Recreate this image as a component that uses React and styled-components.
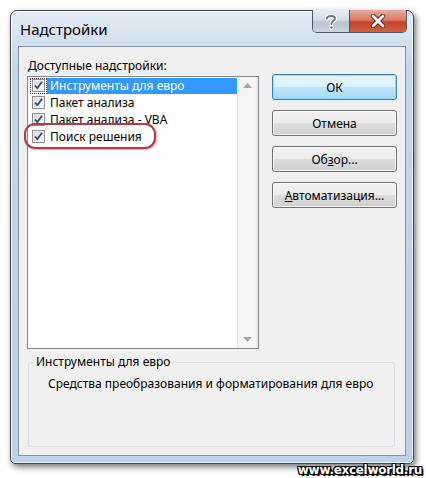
import React from 'react'
import styled, { createGlobalStyle } from 'styled-components'

const GlobalStyle = createGlobalStyle`
  html, body {
    margin: 0;
    padding: 0;
    background: #ffffff;
  }
  body {
    font-family: "Noto Sans", "Open Sans", "DejaVu Sans", sans-serif;
    font-size: 12px;
    color: #000000;
  }
`

const Page = styled.div`
  position: relative;
  width: 426px;
  height: 478px;
  padding: 10px 0 0 10px;
  box-sizing: border-box;
  overflow: hidden;
`

const Window = styled.div`
  width: 404px;
  height: 454px;
  box-sizing: border-box;
  border: 1px solid #3b4a5c;
  border-radius: 7px 7px 5px 5px;
  padding: 0 7px 7px 7px;
  display: flex;
  flex-direction: column;
  background: linear-gradient(180deg, #e4edf7 0px, #d3e1ef 30px, #c2d6eb 60px, #bcd2ea 100%);
  box-shadow: 2px 3px 6px rgba(0, 0, 0, 0.55), inset 0 0 0 1px rgba(255, 255, 255, 0.7);
`

const TitleBar = styled.div`
  height: 35px;
  display: flex;
  align-items: center;
  justify-content: space-between;
`

const Title = styled.div`
  padding-left: 2px;
  font-size: 15px;
  color: #000000;
  margin-top: 1px;
`

const Controls = styled.div`
  align-self: flex-start;
  margin-top: -1px;
  margin-right: -1px;
  display: flex;
  height: 23px;
  border: 1px solid #4b5866;
  border-top: none;
  border-radius: 0 0 5px 5px;
  overflow: hidden;
  box-sizing: border-box;
`

const CaptionButton = styled.div`
  width: ${p => p.$w}px;
  height: 100%;
  display: flex;
  align-items: center;
  justify-content: center;
  box-sizing: border-box;
  background: ${p => p.$close
    ? 'linear-gradient(180deg, #e9a99a 0%, #dc7b66 45%, #c4432b 55%, #d2603f 100%)'
    : 'linear-gradient(180deg, #e6edf4 0%, #d3dde8 45%, #b9c6d4 55%, #c9d5e1 100%)'};
  border-left: ${p => p.$close ? '1px solid #5a4a4a' : 'none'};
`

const Client = styled.div`
  flex: 1;
  border: 1px solid #7f95ad;
  background: #f0f0f0;
  padding: 11px 8px 0 8px;
  display: flex;
  flex-direction: column;
`

const Main = styled.div`
  display: grid;
  grid-template-columns: 232px 125px;
  column-gap: 13px;
`

const LeftColumn = styled.div`
  display: flex;
  flex-direction: column;
`

const FieldLabel = styled.div`
  height: 16px;
  line-height: 16px;
  margin-left: 1px;
  margin-bottom: 2px;
`

const ListBox = styled.div`
  height: 273px;
  box-sizing: border-box;
  border: 1px solid #828790;
  background: #ffffff;
  display: flex;
`

const Items = styled.div`
  flex: 1;
`

const Row = styled.div`
  height: 17px;
  display: flex;
  align-items: center;
`

const CheckCell = styled.div`
  width: 17px;
  height: 16px;
  margin-left: 2px;
  display: flex;
  align-items: center;
  justify-content: center;
  box-sizing: border-box;
  outline: ${p => p.$focused ? '1px dotted #333333' : 'none'};
  outline-offset: -1px;
`

const ItemText = styled.div`
  flex: 1;
  height: 16px;
  line-height: 16px;
  padding-left: 3px;
  background: ${p => p.$selected ? '#3399ff' : 'transparent'};
  color: ${p => p.$selected ? '#ffffff' : '#000000'};
  white-space: nowrap;
`

const Highlight = styled.div`
  position: relative;
  display: flex;
  align-items: center;
  &::after {
    content: '';
    position: absolute;
    left: -4px;
    top: -6px;
    width: 128px;
    height: 22px;
    border: 2px solid #b2384a;
    border-radius: 11px;
    box-shadow: 1px 1px 2px rgba(120, 30, 40, 0.35);
  }
`

const ScrollBar = styled.div`
  width: 21px;
  display: flex;
  flex-direction: column;
  justify-content: space-between;
  background: linear-gradient(90deg, #e3e3e3 0px, #f5f5f5 2px, #f5f5f5 18px, #e6e6e6 21px);
`

const ScrollArrow = styled.div`
  height: 17px;
  display: flex;
  align-items: center;
  justify-content: center;
`

const ButtonColumn = styled.div`
  padding-top: 16px;
  display: flex;
  flex-direction: column;
  gap: 10px;
`

const Button = styled.div`
  height: 26px;
  box-sizing: border-box;
  border: 1px solid ${p => p.$default ? '#3c7fb1' : '#707070'};
  border-radius: 3px;
  display: flex;
  align-items: center;
  justify-content: center;
  background: ${p => p.$default
    ? 'linear-gradient(180deg, #eaf6fd 0%, #d9f0fc 50%, #bee6fd 51%, #a7d9f5 100%)'
    : 'linear-gradient(180deg, #f2f2f2 0%, #ebebeb 50%, #dddddd 51%, #cfcfcf 100%)'};
  box-shadow: inset 0 0 0 1px ${p => p.$default ? 'rgba(120, 220, 255, 0.8)' : 'rgba(255, 255, 255, 0.8)'};
`

const GroupBox = styled.fieldset`
  margin: 5px 0 0 1px;
  width: 367px;
  height: 93px;
  box-sizing: border-box;
  padding: 0;
  border: 1px solid #d5dfe5;
  border-radius: 3px;
`

const Legend = styled.legend`
  margin-left: 5px;
  padding: 0 2px;
  line-height: 16px;
`

const Description = styled.div`
  margin-top: 6px;
  padding-left: 19px;
  line-height: 16px;
`

const Watermark = styled.div`
  position: absolute;
  right: 4px;
  bottom: 1px;
  font-family: "DejaVu Sans", Verdana, sans-serif;
  font-weight: bold;
  font-size: 12px;
  letter-spacing: -0.3px;
  color: #ffffff;
  text-shadow:
    -1px -1px 0 #000, 1px -1px 0 #000, -1px 1px 0 #000, 1px 1px 0 #000,
    0 -1px 0 #000, 0 1px 0 #000, -1px 0 0 #000, 1px 0 0 #000, 2px 2px 1px #000;
`

function CheckBox() {
  return (
    <svg width="13" height="13" viewBox="0 0 13 13">
      <defs>
        <linearGradient id="cb" x1="0" y1="0" x2="1" y2="1">
          <stop offset="0" stopColor="#dcdcdc" />
          <stop offset="1" stopColor="#ffffff" />
        </linearGradient>
      </defs>
      <rect x="0.5" y="0.5" width="12" height="12" fill="#ffffff" stroke="#8e8f8f" />
      <rect x="2" y="2" width="9" height="9" fill="url(#cb)" stroke="#c8c8c8" strokeWidth="0.5" />
      <path d="M3 6.5 L5.3 9.2 L10 2.8" fill="none" stroke="#2c4a7a" strokeWidth="1.8" strokeLinejoin="round" />
    </svg>
  )
}

const items = [
  'Инструменты для евро',
  'Пакет анализа',
  'Пакет анализа - VBA',
  'Поиск решения',
]

export default function App() {
  return (
    <Page>
      <GlobalStyle />
      <Window>
        <TitleBar>
          <Title>Надстройки</Title>
          <Controls>
            <CaptionButton $w={36}>
              <svg width="14" height="17" viewBox="0 0 14 17">
                <path d="M3 5.5 C3 2 11 2 11 5.5 C11 8 7.5 8 7.5 10.5 L7.5 11" fill="none" stroke="#ffffff" strokeWidth="4" strokeLinecap="round" />
                <path d="M3 5.5 C3 2 11 2 11 5.5 C11 8 7.5 8 7.5 10.5 L7.5 11" fill="none" stroke="#6c7884" strokeWidth="2" strokeLinecap="round" />
                <circle cx="7.5" cy="14.5" r="2.2" fill="#ffffff" />
                <circle cx="7.5" cy="14.5" r="1.2" fill="#6c7884" />
              </svg>
            </CaptionButton>
            <CaptionButton $w={57} $close>
              <svg width="16" height="14" viewBox="0 0 16 14">
                <path d="M3 2 L13 12 M13 2 L3 12" stroke="#5b2a22" strokeWidth="4.6" strokeLinecap="round" />
                <path d="M3 2 L13 12 M13 2 L3 12" stroke="#ffffff" strokeWidth="2.8" strokeLinecap="round" />
              </svg>
            </CaptionButton>
          </Controls>
        </TitleBar>
        <Client>
          <Main>
            <LeftColumn>
              <FieldLabel><u>Д</u>оступные надстройки:</FieldLabel>
              <ListBox>
                <Items>
                  {items.map((name, i) => {
                    const content = (
                      <>
                        <CheckCell $focused={i === 0}>
                          <CheckBox />
                        </CheckCell>
                        <ItemText $selected={i === 0}>{name}</ItemText>
                      </>
                    )
                    return (
                      <Row key={name}>
                        {i === 3 ? <Highlight>{content}</Highlight> : content}
                      </Row>
                    )
                  })}
                </Items>
                <ScrollBar>
                  <ScrollArrow>
                    <svg width="9" height="5" viewBox="0 0 9 5">
                      <path d="M0 5 L4.5 0 L9 5 Z" fill="#a6a6a6" />
                    </svg>
                  </ScrollArrow>
                  <ScrollArrow>
                    <svg width="9" height="5" viewBox="0 0 9 5">
                      <path d="M0 0 L4.5 5 L9 0 Z" fill="#a6a6a6" />
                    </svg>
                  </ScrollArrow>
                </ScrollBar>
              </ListBox>
            </LeftColumn>
            <ButtonColumn>
              <Button $default>ОК</Button>
              <Button>Отмена</Button>
              <Button>Об<u>з</u>ор...</Button>
              <Button><u>А</u>втоматизация...</Button>
            </ButtonColumn>
          </Main>
          <GroupBox>
            <Legend>Инструменты для евро</Legend>
            <Description>Средства преобразования и форматирования для евро</Description>
          </GroupBox>
        </Client>
      </Window>
      <Watermark>www.excelworld.ru</Watermark>
    </Page>
  )
}
